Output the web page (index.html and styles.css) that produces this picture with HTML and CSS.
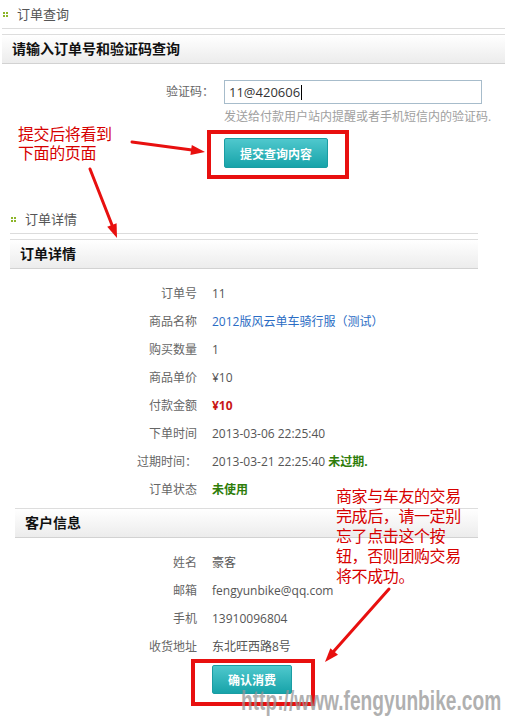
FILE: index.html
```html
<!DOCTYPE html>
<html lang="zh-CN">
<head>
  <meta charset="UTF-8">
  <title>订单查询</title>
  <link rel="stylesheet" href="styles.css">
</head>
<body>
<div class="page">

  <div class="consulta">
    <div class="sec-title"><i class="dots"></i>订单查询</div>
    <div class="bar">请输入订单号和验证码查询</div>
    <div class="form-row">
      <label class="form-label">验证码：</label>
      <div class="form-field">
        <div class="input">11@420606<span class="caret"></span></div>
        <p class="hint">发送给付款用户站内提醒或者手机短信内的验证码.</p>
        <button class="btn btn-big">提交查询内容</button>
      </div>
    </div>
  </div>

  <div class="detalle">
    <div class="sec-title"><i class="dots"></i>订单详情</div>
    <div class="bar">订单详情</div>
    <div class="info">
      <div class="row"><span class="lbl">订单号</span><span class="val">11</span></div>
      <div class="row"><span class="lbl">商品名称</span><a class="val link">2012版风云单车骑行服（测试）</a></div>
      <div class="row"><span class="lbl">购买数量</span><span class="val">1</span></div>
      <div class="row"><span class="lbl">商品单价</span><span class="val">¥10</span></div>
      <div class="row"><span class="lbl">付款金额</span><span class="val price">¥10</span></div>
      <div class="row"><span class="lbl">下单时间</span><span class="val">2013-03-06 22:25:40</span></div>
      <div class="row"><span class="lbl">过期时间：</span><span class="val">2013-03-21 22:25:40 <b class="ok">未过期.</b></span></div>
      <div class="row"><span class="lbl">订单状态</span><span class="val ok">未使用</span></div>
    </div>

    <div class="bar bar-cliente">客户信息</div>
    <div class="info">
      <div class="row"><span class="lbl">姓名</span><span class="val">豪客</span></div>
      <div class="row"><span class="lbl">邮箱</span><span class="val">fengyunbike@qq.com</span></div>
      <div class="row"><span class="lbl">手机</span><span class="val">13910096804</span></div>
      <div class="row"><span class="lbl">收货地址</span><span class="val">东北旺西路8号</span></div>
    </div>
    <div class="acciones">
      <button class="btn btn-small">确认消费</button>
    </div>
  </div>

  <!-- anotaciones encima de la captura -->
  <div class="note note-left">提交后将看到<br>下面的页面</div>
  <div class="note note-right">商家与车友的交易<br>完成后，请一定别<br>忘了点击这个按<br>钮，否则团购交易<br>将不成功。</div>
  <div class="mark mark-1"></div>
  <div class="mark mark-2"></div>

  <svg class="arrows" width="505" height="720" viewBox="0 0 505 720">
    <g stroke="#e8100f" stroke-width="3" fill="none" stroke-linecap="round">
      <line x1="132" y1="142" x2="192" y2="150"/>
      <line x1="90" y1="169" x2="112" y2="225"/>
      <line x1="389" y1="589" x2="334" y2="651"/>
    </g>
    <g fill="#e8100f">
      <polygon points="205,152 191.8,145.1 190.4,155.1"/>
      <polygon points="117,238 107.2,226.8 116.6,223.2"/>
      <polygon points="325,662 330.4,648.2 338,654.8"/>
    </g>
  </svg>

  <div class="watermark">http://www.fengyunbike.com</div>
</div>
</body>
</html>
```

FILE: styles.css
```css
* { box-sizing: border-box; }

body {
  margin: 0;
  font-family: 'Open Sans', 'Noto Sans CJK SC', sans-serif;
  font-size: 12px;
  color: #555;
  background: #fff;
}

.page {
  position: relative;
  width: 505px;
  height: 720px;
  overflow: hidden;
}

.consulta {
  margin-left: 2px;
}

.sec-title {
  display: flex;
  align-items: center;
  height: 29px;
  line-height: 28px;
  font-size: 13px;
  color: #555;
  border-bottom: 1px solid #dcdcdc;
}

.dots {
  width: 5px;
  height: 5px;
  margin: 0 9px 0 1px;
  background:
    linear-gradient(#8db52a, #8db52a) 0 0 / 2px 2px no-repeat,
    linear-gradient(#8db52a, #8db52a) 3px 0 / 2px 2px no-repeat,
    linear-gradient(#8db52a, #8db52a) 0 3px / 2px 2px no-repeat,
    linear-gradient(#8db52a, #8db52a) 3px 3px / 2px 2px no-repeat;
}

.bar {
  margin-top: 5px;
  height: 30px;
  line-height: 28px;
  padding-left: 10px;
  font-size: 14px;
  font-weight: bold;
  color: #111;
  border-top: 1px solid #dddddd;
  border-bottom: 1px solid #d2d2d2;
  background: linear-gradient(to bottom, #ffffff, #ececec);
}

.form-row {
  display: flex;
  padding-top: 16px;
}

.form-label {
  width: 212px;
  line-height: 24px;
  text-align: right;
  color: #666;
}

.form-field {
  margin-left: 10px;
}

.input {
  display: flex;
  align-items: center;
  width: 258px;
  height: 24px;
  padding: 0 4px;
  border: 1px solid #a7bccb;
  font-size: 13px;
  color: #333;
}

.caret {
  width: 1px;
  height: 15px;
  margin-left: 1px;
  background: #000;
}

.hint {
  margin: 5px 0 0;
  line-height: 16px;
  color: #a0a0a0;
  white-space: nowrap;
}

.btn {
  display: block;
  padding: 0;
  border: 1px solid #1a9da3;
  border-radius: 2px;
  background: linear-gradient(to bottom, #4fc8cd, #17a3a9);
  color: #fff;
  font-family: 'Noto Sans CJK SC', sans-serif;
  font-weight: bold;
  font-size: 12px;
}

.btn-big {
  margin-top: 13px;
  width: 104px;
  height: 30px;
}

.btn-small {
  width: 80px;
  height: 29px;
}

.detalle {
  margin: 37px 27px 0 10px;
}

.info {
  padding-top: 11px;
}

.row {
  display: flex;
  height: 28px;
  line-height: 28px;
}

.lbl {
  width: 187px;
  text-align: right;
  color: #666;
  white-space: nowrap;
}

.val {
  margin-left: 15px;
  white-space: nowrap;
}

.link { color: #2a6cc4; }
.price { color: #c81818; font-weight: bold; }
.ok { color: #2f7d0a; font-weight: bold; }

.bar-cliente {
  margin-top: 4px;
  margin-left: 5px;
}

.acciones {
  padding: 4px 0 0 202px;
}

.note {
  position: absolute;
  font-family: 'Noto Sans CJK SC', sans-serif;
  font-size: 16px;
  line-height: 20px;
  letter-spacing: -0.4px;
  color: #d60000;
}

.note-left { left: 18px; top: 124px; line-height: 19px; }
.note-right { left: 336px; top: 485px; }

.mark {
  position: absolute;
  border: 4px solid #e8100f;
}

.mark-1 { left: 207px; top: 130px; width: 142px; height: 49px; }
.mark-2 { left: 191px; top: 659px; width: 124px; height: 47px; }

.arrows {
  position: absolute;
  left: 0;
  top: 0;
  pointer-events: none;
}

.watermark {
  position: absolute;
  left: 241px;
  top: 686px;
  font-family: 'Liberation Sans', sans-serif;
  font-size: 27px;
  font-weight: bold;
  color: rgba(150, 150, 150, 0.75);
  white-space: nowrap;
  transform: scaleX(0.71);
  transform-origin: left top;
}
```
